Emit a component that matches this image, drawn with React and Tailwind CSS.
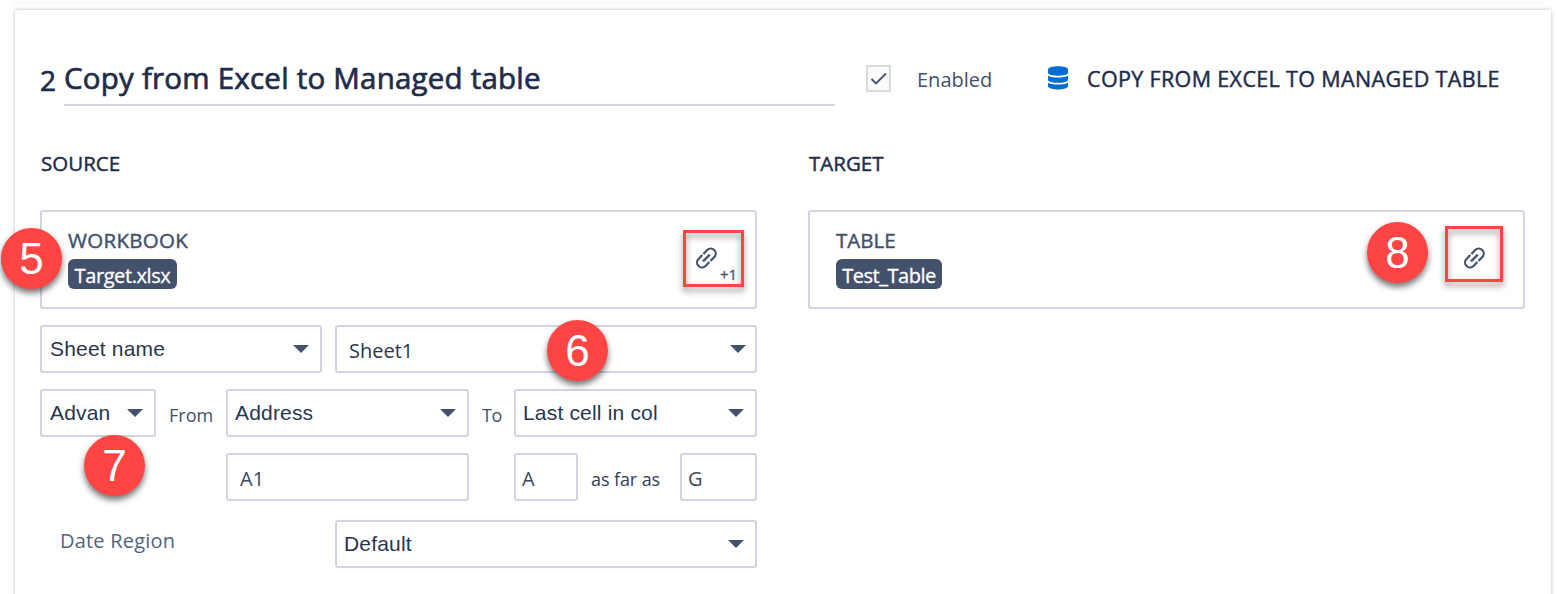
import clsx from 'clsx';

const segoe = "font-['Open_Sans','Noto_Sans',sans-serif]";
const arial = "font-['Liberation_Sans',Arial,sans-serif]";
const selectText = "text-[21px] font-['Liberation_Sans',Arial,sans-serif] tracking-[0.18px]";
const semi = '[-webkit-text-stroke:0.45px_currentColor]';

function LinkIcon() {
  return (
    <svg width="24" height="24" viewBox="0 0 24 24" fill="none" stroke="#44516d" strokeWidth="2.2" className="block">
      <path d="M9.4 7.9 L13.2 4 A4.9 4.9 0 0 1 20.3 11 L16.5 14.9" />
      <path d="M15.4 16.1 L11.6 20 A4.9 4.9 0 0 1 4.5 13 L8.3 9.1" />
      <path d="M9 15.4 L15.8 8.6" />
    </svg>
  );
}

function DatabaseIcon() {
  return (
    <svg width="20" height="24" viewBox="0 0 22 25" fill="#056cd0" className="block" preserveAspectRatio="none">
      <path d="M0 3.6 C0 -1 22 -1 22 3.6 V7.4 C20 11.2 2 11.2 0 7.4 Z" />
      <path d="M0 9.8 C3 12.7 19 12.7 22 9.8 V14.8 C20 18.4 2 18.4 0 14.8 Z" />
      <path d="M0 17.2 C3 20.1 19 20.1 22 17.2 V21.4 C20 25.6 2 25.6 0 21.4 Z" />
    </svg>
  );
}

function Select({ value, className, valueClass = selectText }) {
  return (
    <div className={clsx('h-12 border-2 border-[#d1d5e3] rounded-[3px] flex items-center justify-between', className)}>
      <span className={clsx('leading-6 text-[#28364f] whitespace-nowrap', valueClass)}>{value}</span>
      <svg width="16" height="8" viewBox="0 0 16 8" className="block shrink-0">
        <path d="M0 0 H16 L8 8 Z" fill="#44516d" />
      </svg>
    </div>
  );
}

function Input({ value, className }) {
  return (
    <div className={clsx('h-12 border-2 border-[#d1d5e3] rounded-[3px] flex items-center', className)}>
      <span className="text-[20px] leading-6 text-[#3b4862] pt-[3px]">{value}</span>
    </div>
  );
}

function Picker({ label, labelClass, tag, tagClass, children }) {
  return (
    <div className="h-[99px] border-2 border-[#d1d5e3] rounded-[3px] relative pl-[26px] pt-[15px]">
      <p className={clsx('text-[20.5px] leading-[26px] text-[#44516d]', semi, labelClass)}>{label}</p>
      <span
        className={clsx(
          'mt-[6px] h-[30px] rounded-[6px] bg-[#44516d] text-white text-[20px] leading-[33px] block text-center whitespace-nowrap',
          '[-webkit-text-stroke:0.3px_currentColor]',
          tagClass,
        )}
      >
        {tag}
      </span>
      {children}
    </div>
  );
}

function Marker({ number, className }) {
  return (
    <div
      className={clsx(
        'absolute w-[61px] h-[61px] rounded-full bg-[#ff4444] text-white text-[44px] leading-[61px] text-center shadow-[0_4px_6px_0_rgba(0,0,0,0.55)]',
        arial,
        className,
      )}
    >
      {number}
    </div>
  );
}

export default function App() {
  return (
    <div className={clsx('w-[1557px] h-[594px] bg-white overflow-hidden relative text-[#1f2c4a]', segoe)}>
      <div className="h-px mx-[15px] bg-white shadow-[0_0_6px_rgba(0,0,0,0.25)]"></div>
      <section className="mt-[9px] mx-[15px] w-[1536px] h-[620px] bg-white shadow-[0_0_4px_rgba(0,0,0,0.25)] pl-[25px] pr-[26px]">
        <header className="flex h-[96px]">
          <span className="w-6 pt-[50px] text-[28px] leading-[40px] [-webkit-text-stroke:0.7px_currentColor]">2</span>
          <div className="w-[771px] border-b-2 border-[#d1d5e3] pt-[48px]">
            <h1 className="text-[29.5px] leading-[40px] tracking-[0.22px] whitespace-nowrap [-webkit-text-stroke:0.7px_currentColor]">
              Copy from Excel to Managed table
            </h1>
          </div>
          <div className="mt-[55px] ml-[31px] w-[25px] h-[27px] border-2 border-[#d9dadc] bg-[#fafafa] flex items-center justify-center">
            <svg width="18" height="16" viewBox="0 0 18 16" fill="none" stroke="#44516d" strokeWidth="1.8" className="shrink-0">
              <path d="M1.5 8 L6 12.5 L16 2.5" />
            </svg>
          </div>
          <span className="mt-[56px] ml-[26px] w-[131px] text-[20px] leading-7 text-[#44516d]">Enabled</span>
          <div className="mt-[56px]">
            <DatabaseIcon />
          </div>
          <span className={clsx('mt-[55px] ml-[19px] text-[21.5px] leading-7 tracking-[0.35px] whitespace-nowrap', semi)}>
            COPY FROM EXCEL TO MANAGED TABLE
          </span>
        </header>

        <div className="mt-[43px] flex gap-[51px]">
          <div className="w-[717px]">
            <h2 className={clsx('pl-px text-[20.5px] leading-[28px]', semi)}>SOURCE</h2>
            <div className="mt-[33px]">
              <Picker label="WORKBOOK" labelClass="tracking-[0.3px]" tag="Target.xlsx" tagClass="w-[109px] tracking-[-0.4px]">
                <div className="absolute left-[641px] top-[18px] w-[61px] h-[57px] border-[3px] border-[#ff4444] drop-shadow-[0_4px_3px_rgba(0,0,0,0.45)]"></div>
                <div className="absolute left-[652px] top-[34px]">
                  <LinkIcon />
                </div>
                <span className="absolute left-[678px] top-[52px] text-[15px] leading-5 text-[#44516d] [-webkit-text-stroke:0.3px_currentColor]">+1</span>
              </Picker>
            </div>
            <div className="mt-4 flex justify-between">
              <Select value="Sheet name" className="w-[282px] pl-2 pr-[11px]" />
              <Select value="Sheet1" className="w-[422px] pl-3 pr-[9px]" valueClass="text-[20px] pt-[3px]" />
            </div>
            <div className="mt-4 flex">
              <Select value="Advan" className="w-[116px] pl-2 pr-[11px]" />
              <span className="w-[70px] pl-[13px] pt-[13px] text-[18px] leading-[26px] text-[#44516d]">From</span>
              <Select value="Address" className="w-[243px] pl-[7px] pr-[11px]" />
              <span className="w-[45px] pl-[13px] pt-[13px] text-[18px] leading-[26px] tracking-[-0.5px] text-[#44516d]">To</span>
              <Select value="Last cell in col" className="w-[243px] pl-[7px] pr-[11px]" />
            </div>
            <div className="mt-4 flex pl-[186px]">
              <Input value="A1" className="w-[243px] pl-3" />
              <Input value="A" className="ml-[45px] w-16 pl-[6px]" />
              <span className="w-[102px] pl-[13px] pt-[13px] text-[18px] leading-[26px] tracking-[-0.1px] whitespace-nowrap text-[#33405c]">as far as</span>
              <Input value="G" className="w-[77px] pl-[6px]" />
            </div>
            <div className="mt-[19px] flex">
              <span className="w-[295px] pl-[20px] pt-[7px] text-[20px] leading-[28px] tracking-[0.2px] text-[#56627c]">Date Region</span>
              <Select value="Default" className="w-[422px] pl-[7px] pr-[11px]" />
            </div>
          </div>

          <div className="w-[717px]">
            <h2 className={clsx('pl-px text-[20.5px] leading-[28px]', semi)}>TARGET</h2>
            <div className="mt-[33px]">
              <Picker label="TABLE" tag="Test_Table" tagClass="w-[106px] tracking-[-0.5px]">
                <div className="absolute left-[635px] top-[14px] w-[58px] h-[56px] border-[3px] border-[#ff4444] drop-shadow-[0_4px_3px_rgba(0,0,0,0.45)]"></div>
                <div className="absolute left-[652px] top-[34px]">
                  <LinkIcon />
                </div>
              </Picker>
            </div>
          </div>
        </div>
      </section>

      <Marker number="5" className="left-[1px] top-[228px]" />
      <Marker number="6" className="left-[547px] top-[320px]" />
      <Marker number="7" className="left-[84px] top-[435px]" />
      <Marker number="8" className="left-[1367px] top-[222px]" />
    </div>
  );
}
